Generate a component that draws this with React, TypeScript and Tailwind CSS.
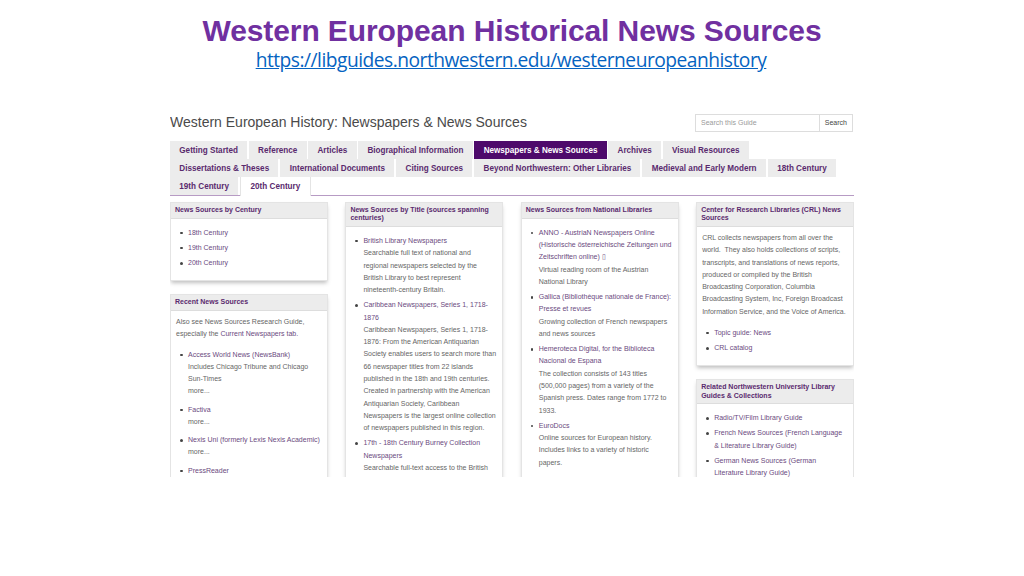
const tabs = [
  "Getting Started",
  "Reference",
  "Articles",
  "Biographical Information",
  "Newspapers & News Sources",
  "Archives",
  "Visual Resources",
  "Dissertations & Theses",
  "International Documents",
  "Citing Sources",
  "Beyond Northwestern: Other Libraries",
  "Medieval and Early Modern",
  "18th Century",
  "19th Century",
  "20th Century",
];

function Panel({ title, children }: { title: string; children: React.ReactNode }) {
  return (
    <div className="mb-[13px] border border-[#e4e4e4] bg-white shadow-[0_3px_4px_-1px_rgba(0,0,0,0.25)]">
      <div className="bg-[#ececec] border-b border-[#dddddd] px-[4px] pt-[3px] pb-[3.5px] text-[7px] leading-[8.2px] font-bold text-[#5a2a6e]">
        {title}
      </div>
      <div className="px-[5px] pt-[5px] pb-[8px]">{children}</div>
    </div>
  );
}

function Item({ link, more, children }: { link: React.ReactNode; more?: boolean; children?: React.ReactNode }) {
  return (
    <li className={`relative pl-[12px] mb-[2.9px] ${more ? "pb-[3px]" : ""}`}>
      <span className="absolute left-[4px] top-[5px] w-[2.5px] h-[2.5px] rounded-full bg-[#444444]" />
      <span className="text-[#6b4a80]">{link}</span>
      {children && <div className="text-[#666666]">{children}</div>}
    </li>
  );
}

function Items({ children }: { children: React.ReactNode }) {
  return <ul className="pt-[3px]">{children}</ul>;
}

export default function App() {
  return (
    <div className="w-[1024px] h-[576px] bg-white overflow-hidden font-['Liberation_Sans',sans-serif]">
      <div className="h-[114px] flex flex-col items-center pt-[13px]">
        <h1 className="text-[30px] leading-[36px] font-bold text-[#7030a0] tracking-[-0.1px]">
          Western European Historical News Sources
        </h1>
        <a className="font-['Open_Sans',sans-serif] text-[19.2px] leading-[22px] text-[#0563c1] underline tracking-[-0.5px] pr-[2px]">
          https://libguides.northwestern.edu/westerneuropeanhistory
        </a>
      </div>

      <div className="w-[684px] ml-[170px] h-[363px] overflow-hidden">
        <div className="flex items-center justify-between h-[18px]">
          <div className="text-[14px] text-[#4a4a4a] pb-[2px]">Western European History: Newspapers &amp; News Sources</div>
          <div className="flex w-[158px] h-[18px] mr-[1px] border border-[#dddddd] text-[7px] leading-[16px]">
            <span className="flex-1 px-[5px] text-[#9a9a9a]">Search this Guide</span>
            <span className="border-l border-[#dddddd] px-[5px] text-[#444444]">Search</span>
          </div>
        </div>

        <div className="mt-[9px] flex flex-wrap border-b border-[#b79bc4]">
          {tabs.map((t, i) => {
            const active = t === "Newspapers & News Sources";
            const current = t === "20th Century";
            return (
              <div
                key={t}
                className={`h-[18px] px-[9.3px] text-[8.15px] leading-[19px] font-bold whitespace-nowrap ${
                  i < 7 ? "mr-[1.5px]" : "mr-[2px]"
                } ${
                  active
                    ? "bg-[#4e0a6b] text-white"
                    : current
                      ? "bg-white text-[#5a2a6e] border-x border-[#e4e4e4] h-[19px] -mb-px"
                      : "bg-[#ececec] text-[#5a2a6e]"
                }`}
              >
                {t}
              </div>
            );
          })}
        </div>

        <div className="mt-[6px] grid grid-cols-4 gap-x-[17.5px] text-[7px] leading-[12.3px] text-[#666666]">
          <div>
            <Panel title="News Sources by Century">
              <Items>
                <Item link="18th Century" />
                <Item link="19th Century" />
                <Item link="20th Century" />
              </Items>
            </Panel>
            <Panel title="Recent News Sources">
              <p>
                Also see News Sources Research Guide, especially the{" "}
                <span className="text-[#6b4a80]">Current Newspapers tab.</span>
              </p>
              <div className="mt-[5px]">
                <Items>
                  <Item link="Access World News (NewsBank)" more>
                    Includes Chicago Tribune and Chicago Sun-Times
                    <br />
                    more...
                  </Item>
                  <Item link="Factiva" more>
                    more...
                  </Item>
                  <Item link="Nexis Uni (formerly Lexis Nexis Academic)" more>
                    more...
                  </Item>
                  <Item link="PressReader" />
                </Items>
              </div>
            </Panel>
          </div>

          <div>
            <Panel title="News Sources by Title (sources spanning centuries)">
              <Items>
                <Item link="British Library Newspapers">
                  Searchable full text of national and regional newspapers selected by the British Library to best
                  represent nineteenth-century Britain.
                </Item>
                <Item link="Caribbean Newspapers, Series 1, 1718-1876">
                  Caribbean Newspapers, Series 1, 1718-1876: From the American Antiquarian Society enables users to
                  search more than 66 newspaper titles from 22 islands published in the 18th and 19th centuries.
                  Created in partnership with the American Antiquarian Society, Caribbean Newspapers is the largest
                  online collection of newspapers published in this region.
                </Item>
                <Item link="17th - 18th Century Burney Collection Newspapers">
                  Searchable full-text access to the British
                </Item>
              </Items>
            </Panel>
          </div>

          <div>
            <Panel title="News Sources from National Libraries">
              <Items>
                <Item link="ANNO - AustriaN Newspapers Online (Historische österreichische Zeitungen und Zeitschriften online) ▯">
                  Virtual reading room of the Austrian National Library
                </Item>
                <Item link="Gallica (Bibliothèque nationale de France): Presse et revues">
                  Growing collection of French newspapers and news sources
                </Item>
                <Item link="Hemeroteca Digital, for the Biblioteca Nacional de Espana">
                  The collection consists of 143 titles (500,000 pages) from a variety of the Spanish press. Dates
                  range from 1772 to 1933.
                </Item>
                <Item link="EuroDocs">
                  Online sources for European history. Includes links to a variety of historic papers.
                </Item>
              </Items>
            </Panel>
          </div>

          <div>
            <Panel title="Center for Research Libraries (CRL) News Sources">
              <p>
                CRL collects newspapers from all over the world.&nbsp; They also holds collections of scripts,
                transcripts, and translations of news reports, produced or compiled by the British Broadcasting
                Corporation, Columbia Broadcasting System, Inc, Foreign Broadcast Information Service, and the Voice of
                America.
              </p>
              <div className="mt-[6px]">
                <Items>
                  <Item link="Topic guide: News" />
                  <Item link="CRL catalog" />
                </Items>
              </div>
            </Panel>
            <Panel title="Related Northwestern University Library Guides & Collections">
              <Items>
                <Item link="Radio/TV/Film Library Guide" />
                <Item link="French News Sources (French Language & Literature Library Guide)" />
                <Item
                  link={
                    <>
                      German News Sources (German
                      <br />
                      Literature Library Guide)
                    </>
                  }
                />
              </Items>
            </Panel>
          </div>
        </div>
      </div>
    </div>
  );
}
